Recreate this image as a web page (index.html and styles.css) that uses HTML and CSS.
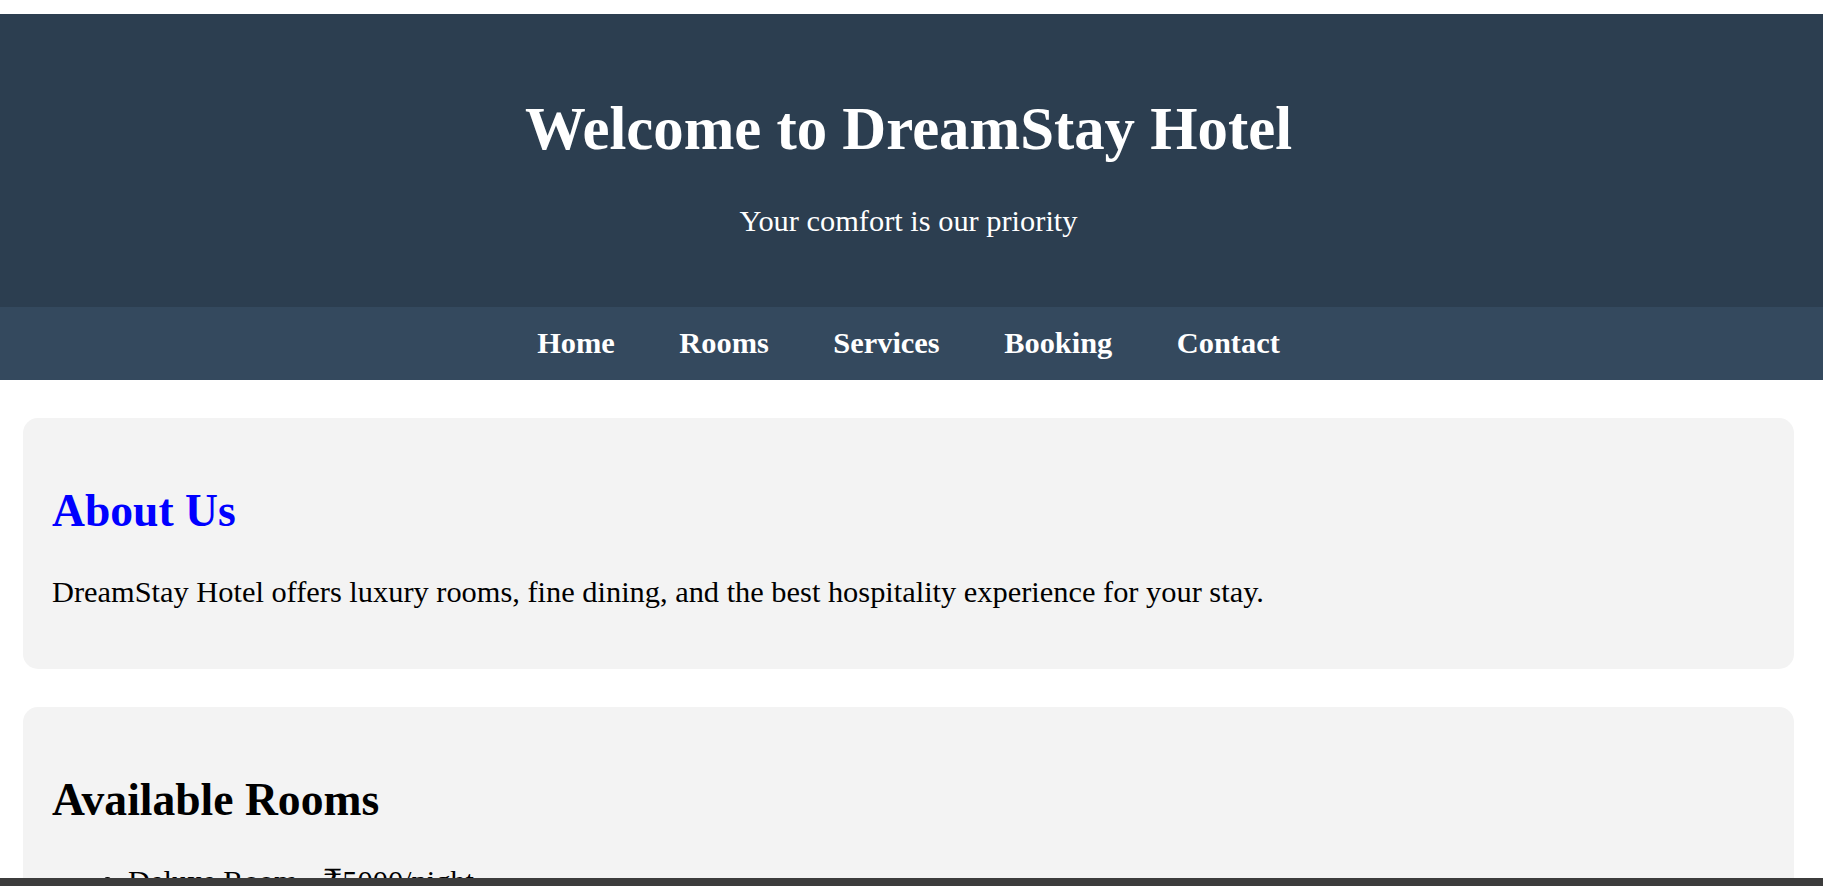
FILE: index.html
```html
<!DOCTYPE html>
<html lang="en">
<head>
<meta charset="utf-8">
<title>DreamStay Hotel</title>
<link rel="stylesheet" href="styles.css">
</head>
<body>
<header class="hero">
  <h1 class="hero-title">Welcome to DreamStay Hotel</h1>
  <p class="hero-tagline">Your comfort is our priority</p>
</header>
<nav class="main-nav">
  <a class="nav-link" href="#home">Home</a>
  <a class="nav-link" href="#rooms">Rooms</a>
  <a class="nav-link" href="#services">Services</a>
  <a class="nav-link" href="#booking">Booking</a>
  <a class="nav-link" href="#contact">Contact</a>
</nav>
<main class="content">
  <section class="card" id="about">
    <h2 class="card-title card-title-blue">About Us</h2>
    <p class="card-text">DreamStay Hotel offers luxury rooms, fine dining, and the best hospitality experience for your stay.</p>
  </section>
  <section class="card" id="rooms">
    <h2 class="card-title">Available Rooms</h2>
    <ul class="room-list">
      <li>Deluxe Room - ₹5000/night</li>
      <li>Suite Room - ₹8000/night</li>
      <li>Standard Room - ₹3000/night</li>
    </ul>
  </section>
</main>
<div class="bottom-bar"></div>
</body>
</html>
```
FILE: styles.css
```css
html, body {
  margin: 0;
  padding: 0;
  background: #ffffff;
}

body {
  font-family: "Liberation Serif", "DejaVu Serif", serif;
  font-size: 30.4px;
  color: #000000;
  padding-top: 14px;
}

.hero {
  background: #2c3e50;
  color: #ffffff;
  text-align: center;
  padding: 80px 6px 69px 0;
}

.hero-title {
  margin: 0 0 41px;
  font-size: 60.8px;
  line-height: 69px;
  font-weight: bold;
}

.hero-tagline {
  margin: 0;
  font-size: 30.4px;
  line-height: 34px;
}

.main-nav {
  background: #34495e;
  display: flex;
  justify-content: center;
  gap: 64.5px;
  padding: 20px 6px 20px 0;
}

.nav-link {
  color: #ffffff;
  text-decoration: none;
  font-weight: bold;
  font-size: 30.4px;
  line-height: 33px;
}

.content {
  display: flex;
  flex-direction: column;
  gap: 38px;
  padding: 38px 29px 40px 23px;
}

.card {
  background: #f3f3f3;
  border-radius: 15px;
  padding: 30px 30px 30px 29px;
}

.card-title {
  margin: 37px 0 38px;
  font-size: 45.6px;
  line-height: 52px;
  font-weight: bold;
}

.card-title-blue {
  color: #0000ff;
}

.card-text {
  margin: 0 0 30px;
  line-height: 34px;
}

.room-list {
  margin: 0 0 30px;
  padding-left: 76px;
  line-height: 34px;
}

.bottom-bar {
  position: fixed;
  left: 0;
  right: 0;
  bottom: 0;
  height: 8px;
  background: #3c3c3c;
}
```
